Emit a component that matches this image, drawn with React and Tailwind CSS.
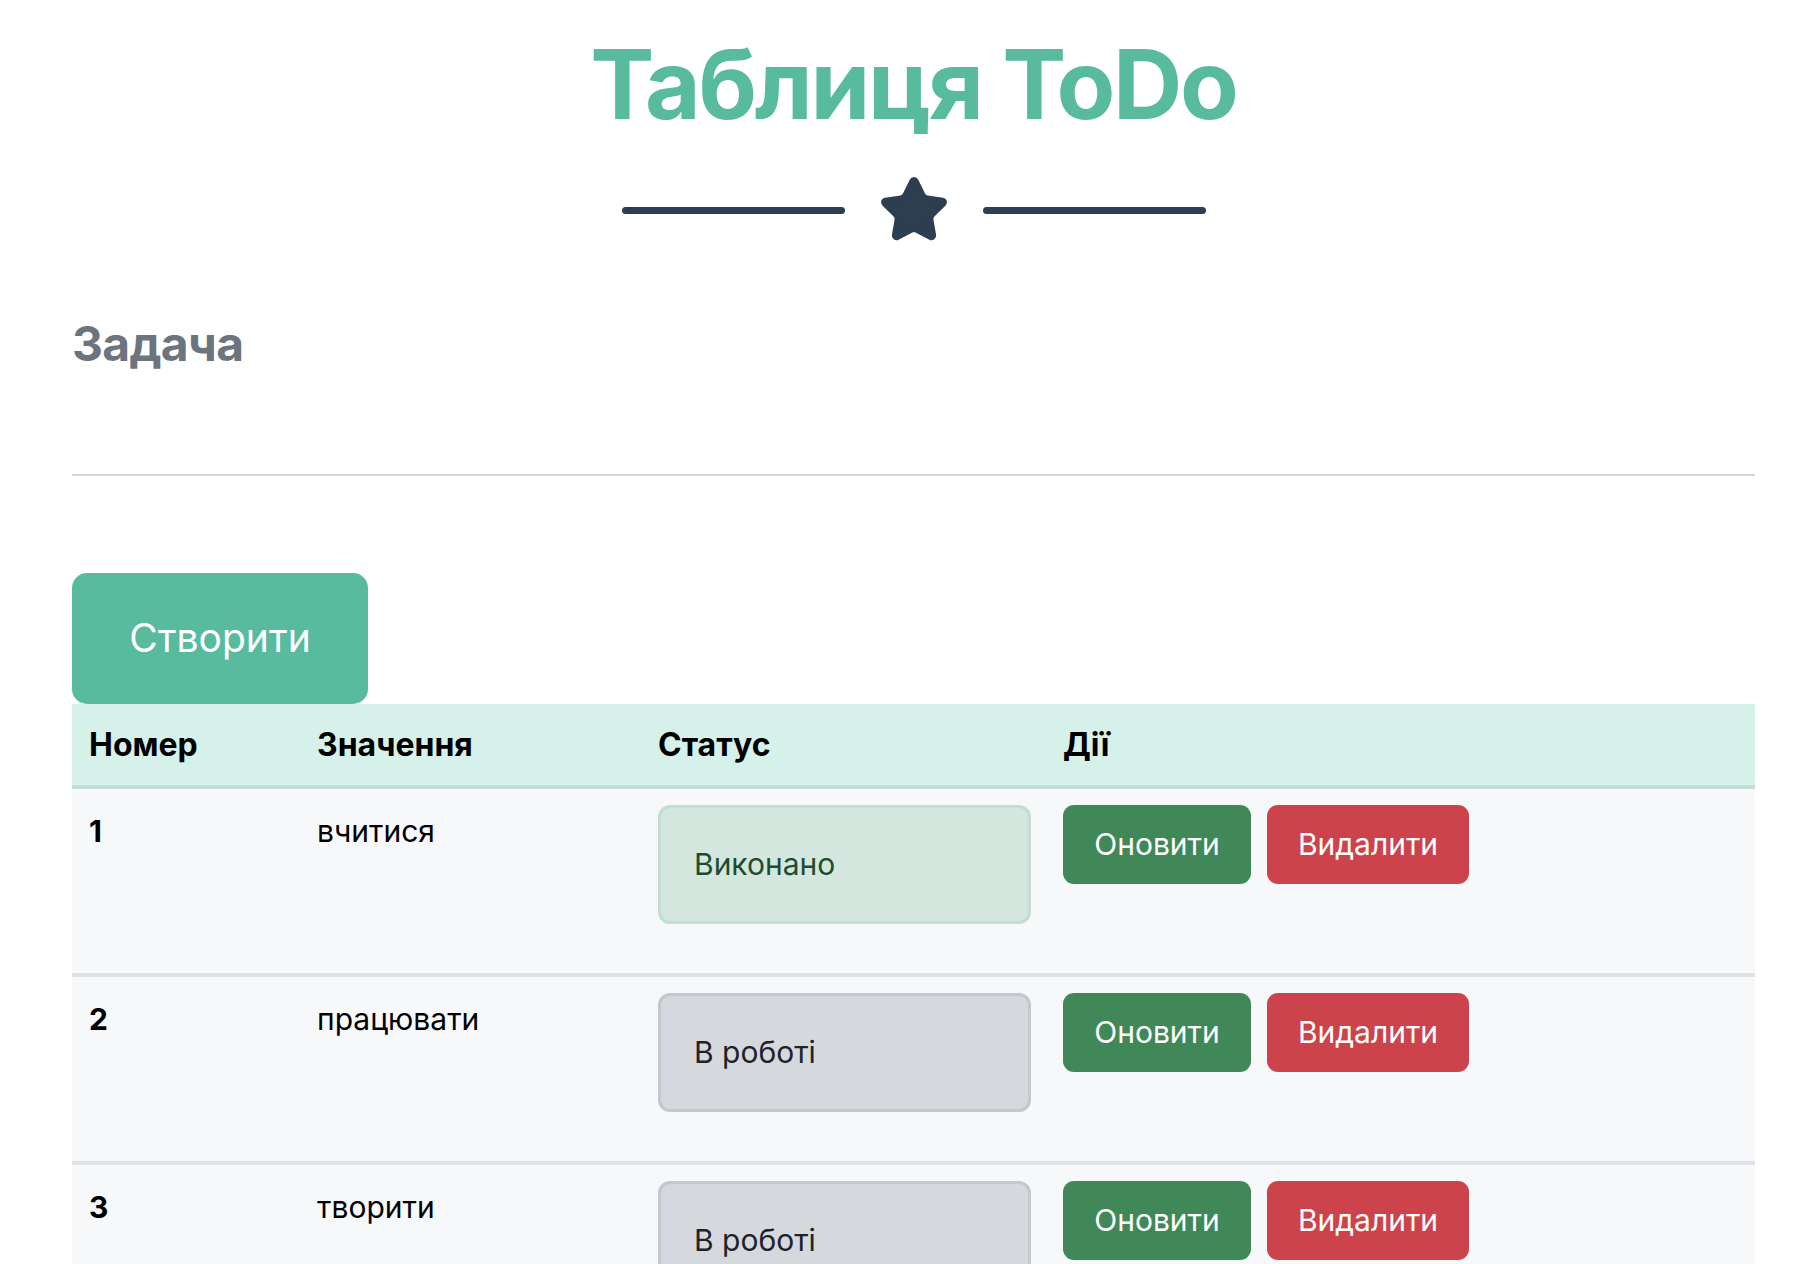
import React from "react";
import { Star } from "lucide-react";

const rows = [
  { n: 1, v: "вчитися", s: "Виконано", done: true },
  { n: 2, v: "працювати", s: "В роботі", done: false },
  { n: 3, v: "творити", s: "В роботі", done: false },
];

export default function App() {
  return (
    <div
      className="min-h-screen bg-white"
      style={{ fontFamily: "Inter, 'Noto Sans', Arial, sans-serif" }}
    >
      <div className="ml-[72px] w-[1683px] pt-[36px]">
        <h1 className="text-center text-[96px] leading-[96px] font-bold text-[#58bb9e] tracking-[-2.3px]">
          Таблиця ToDo
        </h1>
        <div className="mt-[42px] flex h-[72px] items-center justify-center">
          <div className="h-[7px] w-[223px] rounded-full bg-[#2c3e50]" />
          <div className="mx-[33px] flex h-[72px] w-[72px] items-center justify-center">
            <Star size={72} color="#2c3e50" fill="#2c3e50" strokeWidth={2} />
          </div>
          <div className="h-[7px] w-[223px] rounded-full bg-[#2c3e50]" />
        </div>

        <h2 className="mt-[68px] text-[48px] leading-[60px] font-bold text-[#6c757d] tracking-[-0.7px]">
          Задача
        </h2>
        <div className="mt-[100px] h-[2px] bg-[#d3d6da]" />

        <button className="mt-[97px] flex h-[131px] w-[296px] items-center justify-center rounded-[15px] bg-[#58bb9e] text-[39px] text-white">
          Створити
        </button>

        <div className="w-full">
          <div className="grid h-[85px] grid-cols-[227px_341px_405px_1fr] items-center border-b-4 border-[#c3ddd6] bg-[#d6f1ea] text-[32px] font-bold text-black">
            <div className="pl-[17px]">Номер</div>
            <div className="pl-[18px]">Значення</div>
            <div className="pl-[18px]">Статус</div>
            <div className="pl-[18px]">Дії</div>
          </div>
          {rows.map((r) => (
            <div
              key={r.n}
              className="grid h-[188px] grid-cols-[227px_341px_405px_1fr] items-start border-b-4 border-[#dfe1e4] bg-[#f7f8fa] text-[30px] text-black"
            >
              <div className="pl-[17px] pt-[20px] leading-[45px] font-bold">{r.n}</div>
              <div className="pl-[18px] pt-[20px] leading-[45px]">{r.v}</div>
              <div className="pl-[18px] pt-[16px]">
                <div
                  className={
                    r.done
                      ? "flex h-[119px] w-[373px] items-center rounded-[12px] border-[3px] border-[#c2ddd1] bg-[#d4e7df] pl-[33px] text-[#1d4d2f]"
                      : "flex h-[119px] w-[373px] items-center rounded-[12px] border-[3px] border-[#c4c7cc] bg-[#d5d8dd] pl-[33px] text-[#1f2328]"
                  }
                >
                  {r.s}
                </div>
              </div>
              <div className="flex gap-[16px] pl-[18px] pt-[16px]">
                <button className="flex h-[79px] w-[188px] items-center justify-center rounded-[11px] bg-[#418859] text-white">
                  Оновити
                </button>
                <button className="flex h-[79px] w-[202px] items-center justify-center rounded-[11px] bg-[#cd434b] text-white">
                  Видалити
                </button>
              </div>
            </div>
          ))}
        </div>
      </div>
    </div>
  );
}
